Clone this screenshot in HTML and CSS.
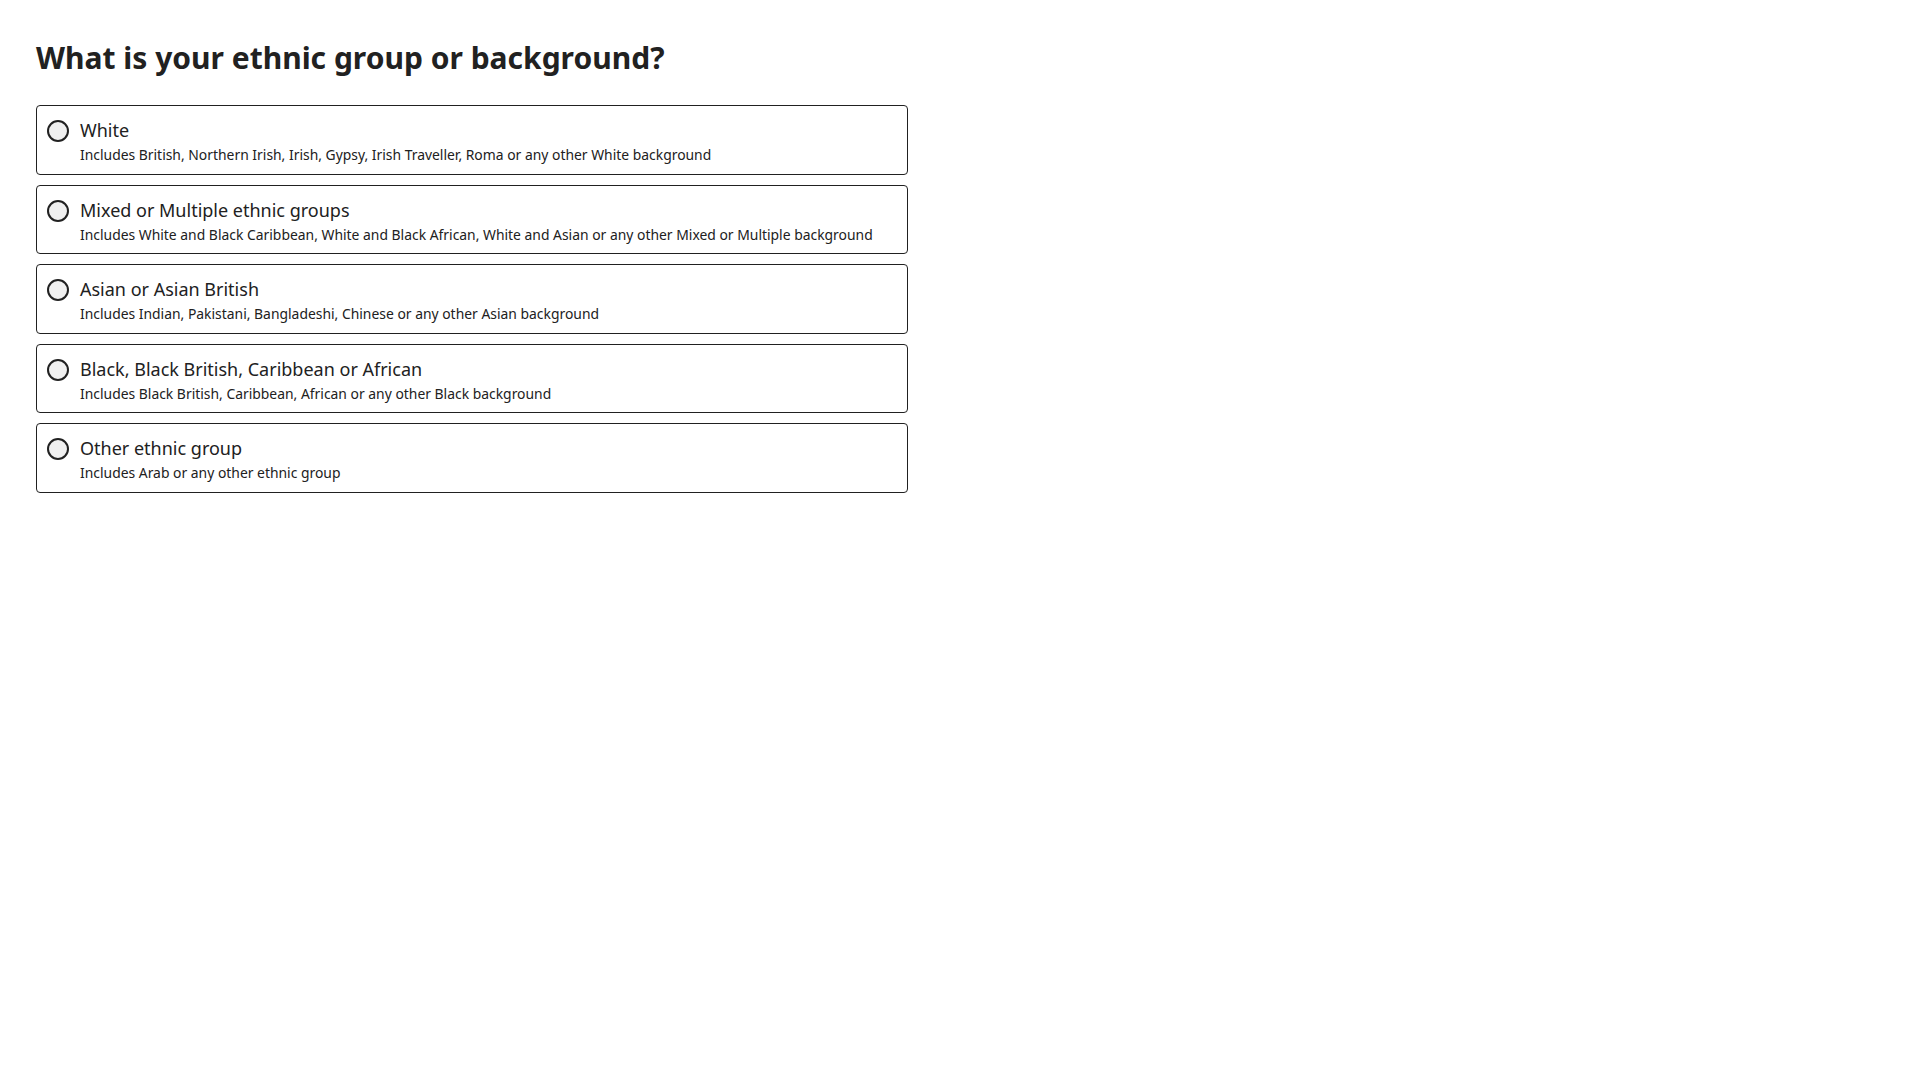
FILE: index.html
```html
<!DOCTYPE html>
<html lang="en">
<head>
<meta charset="utf-8">
<title>Ethnic group</title>
<link rel="stylesheet" href="styles.css">
</head>
<body>
<main class="page">
  <h1 class="question">What is your ethnic group or background?</h1>
  <div class="options">
    <label class="option">
      <span class="radio"></span>
      <span class="text">
        <span class="title">White</span>
        <span class="desc">Includes British, Northern Irish, Irish, Gypsy, Irish Traveller, Roma or any other White background</span>
      </span>
    </label>
    <label class="option">
      <span class="radio"></span>
      <span class="text">
        <span class="title">Mixed or Multiple ethnic groups</span>
        <span class="desc">Includes White and Black Caribbean, White and Black African, White and Asian or any other Mixed or Multiple background</span>
      </span>
    </label>
    <label class="option">
      <span class="radio"></span>
      <span class="text">
        <span class="title">Asian or Asian British</span>
        <span class="desc">Includes Indian, Pakistani, Bangladeshi, Chinese or any other Asian background</span>
      </span>
    </label>
    <label class="option">
      <span class="radio"></span>
      <span class="text">
        <span class="title">Black, Black British, Caribbean or African</span>
        <span class="desc">Includes Black British, Caribbean, African or any other Black background</span>
      </span>
    </label>
    <label class="option">
      <span class="radio"></span>
      <span class="text">
        <span class="title">Other ethnic group</span>
        <span class="desc">Includes Arab or any other ethnic group</span>
      </span>
    </label>
  </div>
</main>
</body>
</html>
```
FILE: styles.css
```css
* { box-sizing: border-box; }
html, body { margin: 0; padding: 0; background: #ffffff; }
body {
  font-family: "Noto Sans", "Open Sans", sans-serif;
  color: #212121;
}
.page {
  padding: 40px 36px 0 36px;
}
.question {
  margin: 0 0 29px 0;
  font-size: 30px;
  line-height: 36px;
  font-weight: 700;
  color: #212121;
}
.options {
  width: 872px;
  display: flex;
  flex-direction: column;
  gap: 10px;
}
.option {
  display: flex;
  gap: 11px;
  align-items: flex-start;
  border: 1px solid #212121;
  border-radius: 4px;
  padding: 11px 10px 8.6px 10px;
  cursor: pointer;
}
.radio {
  flex: none;
  width: 22px;
  height: 22px;
  margin-top: 3px;
  border: 2px solid #212121;
  border-radius: 50%;
  background: #f0f0f0;
}
.text {
  display: flex;
  flex-direction: column;
}
.title {
  font-size: 18px;
  line-height: 27px;
}
.desc {
  font-size: 13.9px;
  line-height: 21px;
}
```
